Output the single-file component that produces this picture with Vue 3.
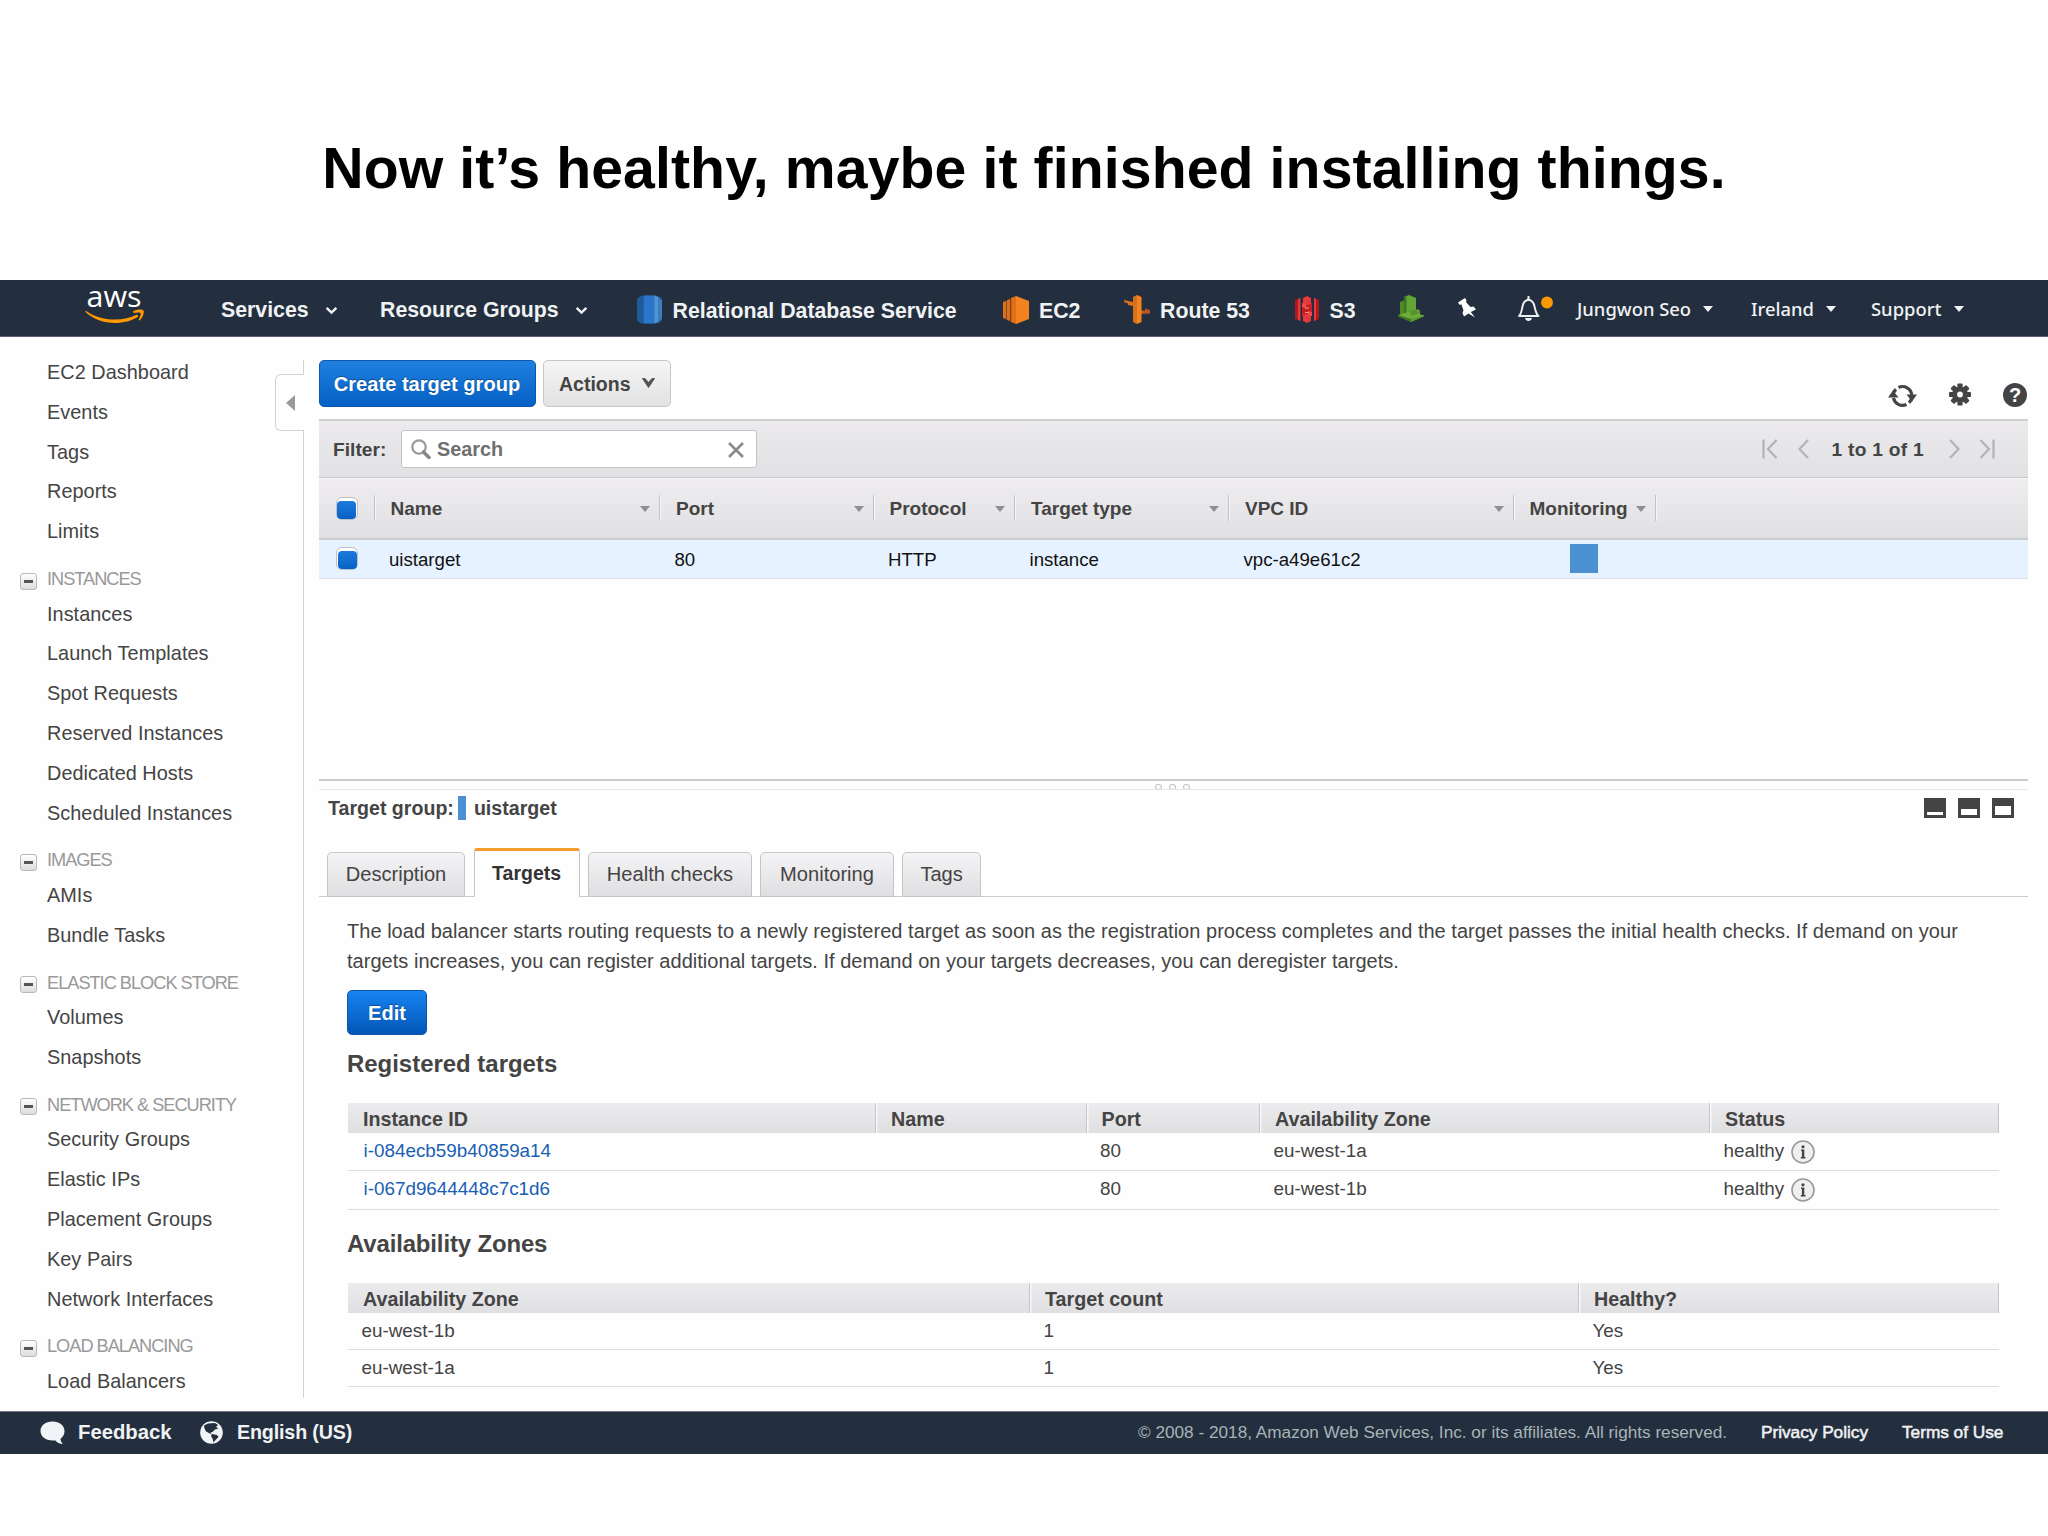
<template>
  <div class="slide">
    <h1 class="slide-title">Now it’s healthy, maybe it finished installing things.</h1>

    <header class="topbar">
      <svg class="logo" viewBox="0 0 60 46">
        <text class="logo-text" x="1.5" y="25" textLength="55" lengthAdjust="spacingAndGlyphs">aws</text>
        <g transform="translate(0 5)" fill="#f90">
          <path d="M0.5 23.5 C14 34 37 35.500 52 27.500 L53.500 29.500 C38 39.500 14 38 0.500 25 Z" />
          <path d="M48 24.500 C52 22 57.500 22 58.500 23.500 C59.500 26 57.500 31 54.500 33.500 L53.500 33 C55 30 56.200 27 55.600 26 C54.500 25 51 25.500 48 25.800 Z" />
        </g>
      </svg>
      <a class="nav services">Services<svg class="chev" viewBox="0 0 12 8"><path d="M1.500 1.500 L6 6 L10.500 1.500" /></svg></a>
      <a class="nav groups">Resource Groups<svg class="chev" viewBox="0 0 12 8"><path d="M1.500 1.500 L6 6 L10.500 1.500" /></svg></a>
      <a class="nav rds">
        <svg width="25" height="29" viewBox="0 0 26 29">
          <path d="M7 0 H19 Q26 1 26 5 V24 Q26 28 19 29 H7 Q0 28 0 24 V5 Q0 1 7 0 Z" fill="#205b99" />
          <path d="M7 0 H18 V29 H7 Z" fill="#2b76cb" />
          <path d="M18 0 L22 1.500 V27.500 L18 29 Z" fill="#5294d0" />
          <path d="M22 1.500 L26 5 V24 L22 27.500 Z" fill="#3a7fc0" />
        </svg>
        <span>Relational Database Service</span>
      </a>
      <a class="nav ec2">
        <svg width="26" height="28" viewBox="0 0 26 28">
          <path d="M13 0 L26 5 V23 L13 28 Z" fill="#f58220" />
          <path d="M8 2 L13 0 V28 L8 26 Z" fill="#e0701a" />
          <path d="M4 4 L7.200 3 V25 L4 24 Z M0 6 L3 5 V23 L0 22 Z" fill="#d9701c" />
          <path d="M7.200 3 H8.300 V25.500 H7.200 Z M3 5 H4 V23.500 H3 Z" fill="#8c4a1c" />
        </svg>
        <span>EC2</span>
      </a>
      <a class="nav r53">
        <svg width="26" height="29" viewBox="0 0 26 29">
          <path d="M0 5 L9 7 V11 L4 10 L3.500 8 L0.500 7.500 Z" fill="#d9701c" />
          <path d="M17 15 L21 16 V13.500 L26 15 V18.500 L17 19 Z" fill="#b9591d" />
          <path d="M9 2 L13 0 V29 L9 27 Z" fill="#d9701c" />
          <path d="M13 0 L17.500 2 V27 L13 29 Z" fill="#f58220" />
        </svg>
        <span>Route 53</span>
      </a>
      <a class="nav s3">
        <svg width="24" height="27" viewBox="0 0 24 27">
          <path d="M0 4 L3 3 V24 L0 23 Z M19 2 L24 4 V23 L19 25 Z" fill="#b0191e" />
          <path d="M3 3 L5.500 2 V25 L3 24 Z M19 2 L21 3 V24 L19 25 Z" fill="#e8393a" />
          <path d="M7 7 H17 V20 H7 Z" fill="#c41f24" />
          <path d="M8 2 L12 0 L16 2 V8 L12 9 L8 8 Z M8 19 L12 18 L16 19 V25 L12 27 L8 25 Z" fill="#e8393a" />
          <path d="M7 7 L11 8 V12 L7 11 Z M13 15 L17 16 V20 L13 19 Z" fill="#f04a46" />
          <path d="M10 12 H14 M10 16.500 H14" stroke="#f6918c" stroke-width="1.200" />
        </svg>
        <span>S3</span>
      </a>
      <svg class="beanstalk" viewBox="0 0 26 27">
        <path d="M2 7 L7 5 V20 L2 19 Z" fill="#4e8a26" />
        <path d="M6 2 L11 0 L18 3 V15 L20 14 L22 16 V20 L14 22 L6 19 Z" fill="#64a636" />
        <path d="M6 2 L8.500 1 V20 L6 19 Z" fill="#3f7420" />
        <path d="M0 20 L12 16.500 L26 20.500 L13 27 Z" fill="#6fae3c" />
        <path d="M0 20 L13 24 V27 L0 21.800 Z" fill="#3f7420" />
        <path d="M13 24 L26 20 V21.500 L13 27 Z" fill="#5a9a2d" />
        <path d="M11 16 L17 15 L21 18 L14 21 Z" fill="#55932b" />
      </svg>
      <svg class="pin" viewBox="0 0 18 20">
        <path d="M0 4.500 L7 0 L8.500 2.500 L8 4 L12.500 9 L15.500 8.500 L18 11.500 L12.800 14 L17 19.500 L10.500 15.500 L6 18.500 L4.500 15 L5.500 12.500 L3.500 6.500 L1.500 6.800 Z" fill="#fff" />
      </svg>
      <svg class="bell" viewBox="0 0 37 26">
        <path d="M2 20 C5.500 17 4.700 9 7 6.500 C8 5 9.500 4 11.500 3.700 C13.500 4 15 5 16 6.500 C18.300 9 17.500 17 21.500 20 Z" fill="none" stroke="#eef1f4" stroke-width="1.900" stroke-linejoin="round" />
        <path d="M11.500 1 V4" stroke="#eef1f4" stroke-width="2.200" stroke-linecap="round" />
        <path d="M8 22 H15 C14.500 26 8.500 26 8 22 Z" fill="#eef1f4" />
        <circle cx="30" cy="6.500" r="5.900" fill="#ff9900" />
      </svg>
      <a class="acct user">Jungwon Seo<i class="tri"></i></a>
      <a class="acct region">Ireland<i class="tri"></i></a>
      <a class="acct support">Support<i class="tri"></i></a>
    </header>

    <div class="body">
      <aside class="sidebar">
        <nav>
          <template v-for="(group, g) in menu" :key="g">
            <div v-if="group.title" class="menu-head"><span class="minus"></span>{{ group.title }}</div>
            <a v-for="item in group.items" :key="item" class="menu-item">{{ item }}</a>
          </template>
        </nav>
        <div class="collapse"><i></i></div>
      </aside>

      <main class="main">
        <div class="actions">
          <button class="btn primary create">Create target group</button>
          <button class="btn plain">Actions<svg width="13" height="10" viewBox="0 0 13 10"><path d="M0.500 0.500 L6.500 9.500 L12.500 0.500 L10 0.500 L6.500 4.500 L3 0.500 Z" fill="#555" stroke="#555" /></svg></button>
          <div class="tools">
            <svg width="29" height="24" viewBox="0 0 29 24">
              <path d="M5 12 A9.300 9.300 0 0 1 8 5.200 M10.500 3.500 A9.300 9.300 0 0 1 23.800 11 M24 13 A9.300 9.300 0 0 1 21 18.800 M18.500 20.500 A9.300 9.300 0 0 1 5.500 14" fill="none" stroke="#444" stroke-width="3.200" />
              <path d="M0 13.500 L5 6.500 L10.500 13.500 Z M18.500 10.500 H29 L24 17.500 Z" fill="#444" />
            </svg>
            <svg width="22" height="23" viewBox="-11 -11.500 22 23">
              <g fill="#444">
                <rect v-for="a in [0, 45, 90, 135]" :key="a" x="-2.600" y="-11" width="5.200" height="22" rx="1" :transform="`rotate(${a})`" />
              </g>
              <circle r="8" fill="#444" /><circle r="2.900" fill="#fff" />
            </svg>
            <svg width="24" height="24" viewBox="0 0 24 24">
              <circle cx="12" cy="12" r="12" fill="#444" />
              <text class="q" x="12" y="19" text-anchor="middle">?</text>
            </svg>
          </div>
        </div>

        <div class="filter">
          <label>Filter:</label>
          <div class="search">
            <svg width="20" height="20" viewBox="0 0 20 20"><circle cx="8" cy="8" r="6.700" fill="none" stroke="#999" stroke-width="2.200" /><path d="M12.500 13 L18 18.500" stroke="#888" stroke-width="3.600" stroke-linecap="round" /></svg>
            <span>Search</span>
            <svg class="clear" width="16" height="16" viewBox="0 0 16 16"><path d="M1 1 L15 15 M15 1 L1 15" stroke="#8a8a8a" stroke-width="2.600" /></svg>
          </div>
          <div class="pager">
            <svg width="16" height="20" viewBox="0 0 16 20"><path d="M1.500 0.500 V19.500 M14.500 1 L6 10 L14.500 19" /></svg>
            <svg width="11" height="20" viewBox="0 0 11 20"><path d="M10 1 L1.500 10 L10 19" /></svg>
            <b>1 to 1 of 1</b>
            <svg width="11" height="20" viewBox="0 0 11 20"><path d="M1 1 L9.500 10 L1 19" /></svg>
            <svg width="16" height="20" viewBox="0 0 16 20"><path d="M14.500 0.500 V19.500 M1.500 1 L10 10 L1.500 19" /></svg>
          </div>
        </div>

        <div class="grid grid-head">
          <div class="cell"><span class="check"></span></div>
          <div v-for="col in columns" :key="col" class="cell"><span>{{ col }}</span><i></i></div>
        </div>
        <div class="grid grid-row">
          <div class="cell"><span class="check"></span></div>
          <div v-for="val in row" :key="val" class="cell"><span>{{ val }}</span></div>
          <div class="cell"><span class="square"></span></div>
        </div>

        <div class="blank"></div>
        <div class="splitter"><i v-for="n in 3" :key="n"></i></div>

        <div class="detail-head">
          <b>Target group:</b><span class="mark"></span><b>uistarget</b>
          <div class="panes"><i class="low"></i><i class="mid"></i><i class="high"></i></div>
        </div>

        <div class="tabs">
          <a v-for="tab in tabs" :key="tab.label" class="tab" :class="{ active: tab.label === current }" :style="{ width: tab.width + 'px' }">{{ tab.label }}</a>
        </div>

        <div class="detail">
          <p class="para">The load balancer starts routing requests to a newly registered target as soon as the registration process completes and the target passes the initial health checks. If demand on your<br />targets increases, you can register additional targets. If demand on your targets decreases, you can deregister targets.</p>
          <button class="btn primary edit">Edit</button>

          <h3>Registered targets</h3>
          <div class="list targets">
            <div class="list-head">
              <div v-for="h in ['Instance ID', 'Name', 'Port', 'Availability Zone', 'Status']" :key="h">{{ h }}</div>
            </div>
            <div v-for="t in targets" :key="t.id" class="list-row">
              <div><a class="link">{{ t.id }}</a></div>
              <div></div>
              <div>{{ t.port }}</div>
              <div>{{ t.zone }}</div>
              <div class="status">healthy
                <svg width="24" height="24" viewBox="0 0 24 24"><circle cx="12" cy="12" r="11" fill="#efefef" stroke="#999" stroke-width="1.600" /><path d="M10 9.500 H13.300 V17 H14.500 V18.500 H9.800 V17 H10.900 V11 H10 Z" fill="#444" /><circle cx="12" cy="6.800" r="1.600" fill="#444" /></svg>
              </div>
            </div>
          </div>

          <h3 class="second">Availability Zones</h3>
          <div class="list zones">
            <div class="list-head">
              <div v-for="h in ['Availability Zone', 'Target count', 'Healthy?']" :key="h">{{ h }}</div>
            </div>
            <div v-for="z in zones" :key="z.name" class="list-row">
              <div>{{ z.name }}</div>
              <div>{{ z.count }}</div>
              <div>{{ z.healthy }}</div>
            </div>
          </div>
        </div>
      </main>
    </div>

    <footer class="footer">
      <svg width="25" height="24" viewBox="0 0 25 24"><path d="M12.500 0.500 C19.500 0.500 24.500 4.500 24.500 10 C24.500 13.500 23 16 20.500 17.700 C20.700 20 21.500 21.500 23 23 C19.500 22.800 17 21.500 15.500 19.400 C6.500 20.500 0.500 16 0.500 10 C0.500 4.500 5.500 0.500 12.500 0.500 Z" fill="#f1f4f7" /></svg>
      <b class="feedback">Feedback</b>
      <svg width="23" height="23" viewBox="0 0 23 23">
        <circle cx="11.500" cy="11.500" r="11.300" fill="#f1f4f7" />
        <path d="M4 4.500 L8 2.500 L15 2 L18 4 L16 6 L18.500 7.500 L15 8.500 L12.500 11 L10.500 11.500 L11.500 13.500 L9 12 L6 10.500 L4.500 7.500 Z M12 13 L17 14 L18.500 16 L15.500 19 L13.500 21.500 L12.500 17.500 L11 15 Z" fill="#232f3e" />
      </svg>
      <b class="lang">English (US)</b>
      <span class="copy">© 2008 - 2018, Amazon Web Services, Inc. or its affiliates. All rights reserved.</span>
      <a class="legal privacy">Privacy Policy</a>
      <a class="legal">Terms of Use</a>
    </footer>
  </div>
</template>

<script setup>
import { ref } from "vue";

const current = ref("Targets");

const menu = [
  { items: ["EC2 Dashboard", "Events", "Tags", "Reports", "Limits"] },
  { title: "INSTANCES", items: ["Instances", "Launch Templates", "Spot Requests", "Reserved Instances", "Dedicated Hosts", "Scheduled Instances"] },
  { title: "IMAGES", items: ["AMIs", "Bundle Tasks"] },
  { title: "ELASTIC BLOCK STORE", items: ["Volumes", "Snapshots"] },
  { title: "NETWORK & SECURITY", items: ["Security Groups", "Elastic IPs", "Placement Groups", "Key Pairs", "Network Interfaces"] },
  { title: "LOAD BALANCING", items: ["Load Balancers"] }
];

const columns = ["Name", "Port", "Protocol", "Target type", "VPC ID", "Monitoring"];
const row = ["uistarget", "80", "HTTP", "instance", "vpc-a49e61c2"];

const tabs = [
  { label: "Description", width: 138 },
  { label: "Targets", width: 106 },
  { label: "Health checks", width: 163.5 },
  { label: "Monitoring", width: 133.5 },
  { label: "Tags", width: 78.5 }
];

const targets = [
  { id: "i-084ecb59b40859a14", port: 80, zone: "eu-west-1a" },
  { id: "i-067d9644448c7c1d6", port: 80, zone: "eu-west-1b" }
];
const zones = [
  { name: "eu-west-1b", count: 1, healthy: "Yes" },
  { name: "eu-west-1a", count: 1, healthy: "Yes" }
];
</script>

<style>
body { background: #fefefe; }
</style>

<style scoped>
* { box-sizing: border-box; }
.slide { width: 2048px; height: 1536px; overflow: hidden; background: #fefefe; font-family: "Liberation Sans", Arial, sans-serif; color: #444; display: flex; flex-direction: column; }
.slide-title { margin: 0; height: 280px; padding-top: 136px; line-height: 64px; font-size: 57.2px; letter-spacing: 0.1px; font-weight: 700; color: #000; text-align: center; flex: none; }
svg { display: block; flex: none; }

.topbar { height: 57px; flex: none; background: #232f3e; border-bottom: 1px solid #5a6170; display: flex; align-items: center; padding-left: 85px; color: #f0f2f4; white-space: nowrap; }
.logo { width: 60px; height: 46px; margin-top: -6px; overflow: visible; }
.logo-text { font: 500 29px "Open Sans", "Noto Sans", sans-serif; fill: #fff; }
.nav { display: flex; align-items: center; font-size: 21.3px; font-weight: 700; height: 56px; padding-top: 3px; flex: none; }
.chev { width: 13px; height: 9px; margin-left: 16px; }
.chev path { fill: none; stroke: #f0f2f4; stroke-width: 2.2; }
.services { width: 159px; margin-left: 76px; padding-top: 4px; }
.groups { width: 257px; padding-top: 4px; }
.nav span { margin-left: 10.500px; padding-top: 4px; }
.rds { width: 365.5px; }
.ec2 { width: 121px; }
.r53 { width: 171.5px; }
.s3 { width: 103px; }
.beanstalk { width: 26px; height: 27px; margin-right: 34px; }
.pin { width: 18px; height: 20px; margin-right: 41px; }
.bell { width: 37px; height: 26px; margin: 2px 23px 0 0; }
.acct { display: flex; align-items: center; font: 500 18.4px "Noto Sans", sans-serif; flex: none; }
.tri { border: 5.500px solid transparent; border-top: 6px solid #f0f2f4; border-bottom: 0; margin: 2px 0 0 12px; }
.user { width: 174px; }
.region { width: 120px; }

.body { display: flex; height: 1074px; flex: none; }
.sidebar { width: 304px; position: relative; padding-top: 16px; flex: none; }
.sidebar::after { content: ""; position: absolute; right: 0; top: 23px; height: 1038px; width: 1.500px; background: #d2d2d6; }
.menu-item { display: block; height: 39.800px; line-height: 39.800px; padding-left: 47px; font-size: 19.850px; letter-spacing: 0.050px; }
.menu-head { height: 42.600px; padding-top: 12.500px; line-height: 31px; padding-left: 20px; font-size: 18.200px; color: #999; display: flex; align-items: center; letter-spacing: -1px; }
.minus { width: 17px; height: 17px; margin: 3px 10px 0 0; border: 1.500px solid #b9b9b9; border-radius: 3px; background: linear-gradient(#fff, #ddd); display: flex; align-items: center; justify-content: center; }
.minus::after { content: ""; width: 9px; height: 3px; background: #555; }
.collapse { position: absolute; z-index: 1; right: 0; top: 37px; width: 29px; height: 57px; background: #fefefe; border: 1.500px solid #d2d2d6; border-right: 0; border-radius: 6px 0 0 6px; }
.collapse i { display: block; margin: 19.500px 0 0 9.500px; width: 0; border: 8.500px solid transparent; border-right: 9px solid #999; border-left: 0; }

.main { width: 1709px; margin-left: 14.500px; padding-top: 22.500px; }
.actions { display: flex; height: 59.500px; }
.btn { font: 700 19.500px "Liberation Sans", Arial, sans-serif; padding: 2px 0 0; height: 47px; border-radius: 5px; display: flex; align-items: center; justify-content: center; }
.primary { color: #fff; border: 1px solid #0a57ad; background: linear-gradient(#1f80e0, #0560c4); text-shadow: 0 -1px 1px rgba(0,0,0,0.350); }
.create { width: 217px; font-size: 20.100px; }
.plain { width: 127.500px; margin-left: 7.500px; color: #444; border: 1.500px solid #c8c8c8; background: linear-gradient(#f6f6f6, #e2e1e3); }
.plain svg { margin: -3px 0 0 11px; }
.tools { margin-left: auto; display: flex; align-items: center; padding: 10px 1px 0 0; height: 60px; }
.tools svg:nth-child(1) { margin-top: 2px; }
.tools svg:nth-child(2) { margin: -1px 32px 0 32px; }
.q { font: 700 20px "Liberation Sans", sans-serif; fill: #fff; }

.filter { height: 59px; border-top: 2px solid #cfced1; border-bottom: 1px solid #c6c5c9; background: linear-gradient(#eceaec, #e1e0e2); display: flex; align-items: center; padding-left: 14.500px; font-size: 19.200px; font-weight: 700; }
.filter label { width: 67.500px; padding-top: 1px; }
.search { width: 356px; height: 38px; background: #fff; border: 1.500px solid #c3c3c6; border-radius: 3px; display: flex; align-items: center; padding: 0 12px 0 9.500px; color: #6f6f6f; }
.search span { margin-left: 6px; padding-top: 1px; font-size: 19.800px; }
.clear { margin: 1px 0 0 auto; }
.pager { margin-left: auto; margin-right: 33px; display: flex; align-items: center; }
.pager path { fill: none; stroke: #b3b2b5; stroke-width: 2.200; }
.pager b { width: 93px; margin: 0 24px 0 22.500px; padding-top: 1px; white-space: nowrap; letter-spacing: 0.250px; font-size: 19.200px; }
.pager svg:nth-child(2) { margin-left: 20px; }
.pager svg:last-child { margin-left: 19px; }

.grid { display: grid; grid-template-columns: 56px 285.500px 213.500px 141.500px 214px 284.500px 142px; }
.grid .cell > span:not(.check):not(.square) { padding-top: 1.500px; }
.grid-head { height: 61.500px; background: linear-gradient(#efedef, #e0dfe1); border-top: 1px solid #f8f8f8; border-bottom: 2px solid #cdccd0; align-items: center; font-size: 19px; font-weight: 700; }
.grid-head .cell { height: 26px; border-right: 1.500px solid #c2c1c4; box-shadow: 1px 0 #f6f6f6; display: flex; align-items: center; padding-left: 16px; }
.grid-head .cell i { margin: 1px 9px 0 auto; border: 5.500px solid transparent; border-top: 6.500px solid #8f8f92; border-bottom: 0; }
.grid-row { height: 39.500px; background: #e6f2ff; border-bottom: 1.500px solid #dde0ec; align-items: center; color: #111; font-size: 18.650px; }
.grid-row .cell { padding-left: 14.500px; height: 38px; display: flex; align-items: center; }
.check { width: 22px; height: 23px; margin: 1px 0 0 1px; border: 1.500px solid #c0c0c4; border-radius: 6px; background: #fff; display: flex; align-items: flex-end; justify-content: center; }
.check::after { content: ""; width: 19px; height: 18px; border-radius: 4px; background: linear-gradient(#1d7bdc, #0761c5); }
.grid-row .check { margin: -1px 0 0 3px; }
.square { width: 28px; height: 29px; background: #4a90d2; margin: 0 0 0 41.500px; }

.blank { height: 200px; }
.splitter { height: 10.500px; border-top: 2px solid #cbc9ce; border-bottom: 1px solid #e8e5ec; display: flex; gap: 7px; justify-content: center; align-items: flex-end; padding-right: 1px; }
.splitter i { width: 7px; height: 6px; border: 1.500px solid #c5c2c8; border-radius: 50%; border-bottom-color: #ddd; margin: 0 0 -1px; }
.detail-head { height: 58px; display: flex; align-items: center; padding: 0 14px 20px 9.500px; font-size: 19.600px; }
.mark { width: 7.500px; height: 24px; background: #4a90d2; margin: -1px 8px 0 4.500px; }
.panes { margin: -2px 0 0 auto; display: flex; gap: 12px; }
.panes i { width: 22px; height: 20px; border: 3px solid #444; background: #fff; }
.panes .low { border-top-width: 14px; }
.panes .mid { border-top-width: 11px; }
.panes .high { border-top-width: 8px; }
.tabs { height: 49px; display: flex; align-items: flex-end; gap: 8.600px; padding-left: 8.500px; border-bottom: 1.500px solid #cccad0; }
.tab { height: 45px; margin-bottom: -1px; border: 1.500px solid #c5c4c9; border-radius: 5px 5px 0 0; background: linear-gradient(#f4f3f5, #dfdee0); font-size: 20.100px; display: flex; align-items: center; justify-content: center; flex: none; }
.tab.active { height: 48.500px; background: #fefefe; border-top: 3.500px solid #f39c2b; border-bottom: 0; font-weight: 700; color: #333; font-size: 19.500px; border-radius: 3px 3px 0 0; }

.detail { padding: 20.500px 28.500px 0 28.500px; }
.para { margin: 0; line-height: 29.700px; font-size: 20px; letter-spacing: 0.030px; white-space: nowrap; }
.edit { width: 80px; height: 45px; margin-top: 13.500px; font-size: 20px; background: linear-gradient(#1883f2, #0257b6); }
h3 { margin: 14px 0 0; height: 54px; line-height: 30px; font-size: 23.950px; font-weight: 700; }
.second { margin-top: 19px; letter-spacing: -0.130px; }
.list { margin-left: 1px; }
.list-head, .list-row { display: grid; align-items: center; }
.targets > div { grid-template-columns: 528px 210.500px 173.500px 450px 289px; }
.zones > div { grid-template-columns: 682px 549px 420px; }
.list-head { height: 30px; font-size: 19.700px; font-weight: 700; background: linear-gradient(#ecebed, #dfdee1); }
.list-head div { height: 30px; line-height: 32px; padding-left: 15px; border-right: 1.500px solid #c6c5c9; box-shadow: 1.500px 0 #f8f8f8; }
.list-head div:last-child { box-shadow: none; }
.list-row { height: 38.500px; border-bottom: 1.500px solid #dddce2; font-size: 18.850px; padding-bottom: 2px; }
.zones .list-row { height: 36.800px; padding-bottom: 0; }
.list-row div { padding-left: 13.500px; }
.list-row .link { color: #1a5fb4; padding-left: 2px; }
.status { display: flex; align-items: center; gap: 7px; }
.status svg { margin-top: 2px; }

.footer { height: 42.500px; flex: none; background: #232f3e; border-top: 1px solid #707885; display: flex; align-items: center; padding-left: 39.500px; color: #f0f2f4; font-size: 20.300px; white-space: nowrap; }
.feedback { width: 122px; margin-left: 13.500px; }
.lang { width: 901px; margin-left: 14px; font-size: 19.700px; letter-spacing: -0.150px; }
.copy { width: 623px; font-size: 17.200px; color: #a9b3b8; }
.legal { font-size: 17.300px; letter-spacing: -0.040px; -webkit-text-stroke: 0.500px #f0f2f4; }
.privacy { width: 141px; }
</style>
